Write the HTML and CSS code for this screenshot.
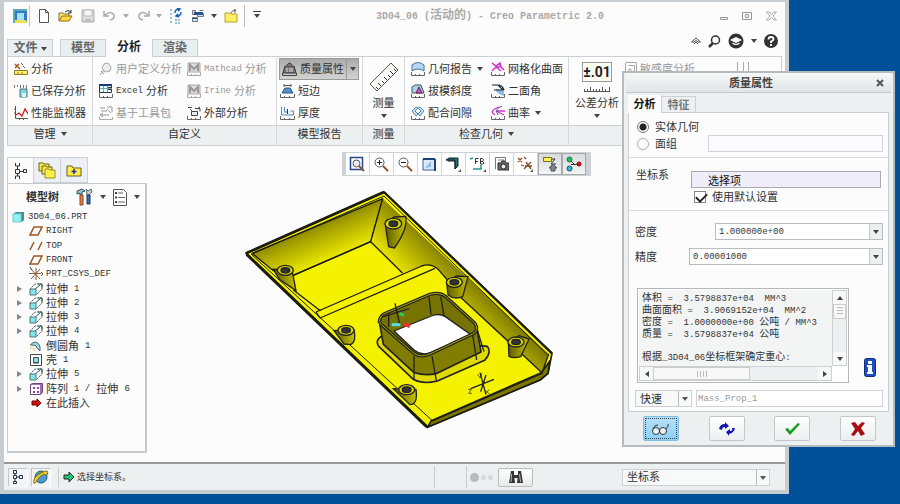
FILE: index.html
```html
<!DOCTYPE html>
<html lang="zh-CN">
<head>
    <meta charset="UTF-8">
    <meta name="viewport" content="width=device-width, initial-scale=1.0">
    <title>3D04_06 - Creo Parametric 2.0</title>
    <link rel="stylesheet" href="styles.css">
</head>
<body>

<!-- shared icons -->
<svg class="sprite" aria-hidden="true">
    <symbol id="plane" viewBox="0 0 14 12"><path d="M5 2h8l-4 8H1z" fill="none" stroke="#9a5526" stroke-width="1.5"/></symbol>
    <symbol id="extrude" viewBox="0 0 14 14"><path d="M1 7l5-5h7v5l-6 6" fill="none" stroke="#456" stroke-dasharray="2 1"/><path d="M5 8l6-5M9 2h4v4" fill="none" stroke="#255"/><path d="M1 7h6v6H1z" fill="#7de8ee" stroke="#577"/></symbol>
    <symbol id="folder" viewBox="0 0 16 14"><path d="M1 3h5l1 2h8v8H1z" fill="#ffee4a" stroke="#665f20"/></symbol>
    <symbol id="ruled-m" viewBox="0 0 14 14"><path d="M1 1h12v9H1z" fill="#ddd" stroke="#aaa"/><path d="M3 9V3l4 4 4-4v6" fill="none" stroke="#999" stroke-width="2"/><path d="M.5 10v3.500h13V10M4.500 12v1M8.500 12v1" fill="none" stroke="#aaa"/></symbol>
    <symbol id="glass" viewBox="0 0 16 16"><circle cx="6.500" cy="6.500" r="4.500" fill="#fff" stroke="#555"/><path d="M10 10l5 5" stroke="#8b5530" stroke-width="2"/></symbol>
</svg>

<main class="window">
    <header class="titlebar">
        <div class="quick">
            <button class="ico app" title="Creo"><svg width="14" height="14" viewBox="0 0 14 14"><path d="M0 0h14v14H0z" fill="#b9d96e"/><path d="M2 2h12v10H2z" fill="#3a77c8"/><path d="M4 4h7v7H4z" fill="#9fe6ef"/><path d="M0 0h14v2H2v12H0z" fill="#5aa9bd"/><path d="M2 11h11v3H2z" fill="#edde54"/></svg></button>
            <button class="ico" title="新建"><svg width="14" height="14" viewBox="0 0 14 14"><path d="M2.500.5h6l3 3v10h-9zM8.500.5v3h3" fill="#fff" stroke="#555"/></svg></button>
            <button class="ico" title="打开"><svg width="16" height="14" viewBox="0 0 16 14"><path d="M1 12V4h4l1 1h5v2" fill="#ffe97a" stroke="#8a7020"/><path d="M1 12l3-5h10l-3 5z" fill="#ffd93c" stroke="#8a7020"/><path d="M7 3q3-3 6 0M13 1v3h-3" fill="none" stroke="#333"/></svg></button>
            <button class="ico" title="保存"><svg width="14" height="14" viewBox="0 0 14 14"><path d="M1 1h12v12H1z" fill="#ddd" stroke="#aaa"/><path d="M3 1h8v6H3z" fill="#f5f5f5" stroke="#bbb"/><path d="M4 10h6v3H4z" fill="#bbb"/></svg></button>
            <button class="ico" title="撤消"><svg width="14" height="14" viewBox="0 0 14 14"><path d="M2 6q6-5 9 0 1 4-4 5M1 2v5h5" fill="none" stroke="#aaa" stroke-width="1.500"/></svg></button>
            <i class="caret dim"></i>
            <button class="ico" title="重做"><svg width="14" height="14" viewBox="0 0 14 14"><path d="M12 6Q6 1 3 6q-1 4 4 5M13 2v5H8" fill="none" stroke="#aaa" stroke-width="1.500"/></svg></button>
            <i class="caret dim"></i>
            <button class="ico" title="重新生成"><svg width="14" height="16" viewBox="0 0 14 16"><path d="M1 2h3M1 6h3M1 10h3M6 12h6M6 15h6M1 14h3" stroke="#36839c" stroke-dasharray="2 1"/><path d="M6 5q0-4 4-4M8 0l3 1-2 2M12 4q0 4-4 4M10 9L7 8l2-2" fill="none" stroke="#1465b8" stroke-width="1.500"/></svg></button>
            <button class="ico" title="窗口"><svg width="14" height="14" viewBox="0 0 14 14"><path d="M1.500 1.500h3v4h-3zM6.500 4.500h6v3h-6zM1.500 8.500h5v4h-5zM8.500 1.500h4" fill="#cfe1f2" stroke="#777"/><path d="M3 3h9v3H3zM1 9h5v1H1z" fill="#27548f"/></svg></button>
            <i class="caret"></i>
            <button class="ico" title="关闭"><svg width="14" height="14" viewBox="0 0 14 14"><path d="M1 4h5l1 1h6v8H1z" fill="#ffef65" stroke="#b5a22c"/><path d="M7 4q1-3 5-3M11 0v4" fill="none" stroke="#5b5b4b"/></svg></button>
            <button class="ico more" title="自定义"><i class="caret lined"></i></button>
        </div>
        <h1><span>3D04_06 (</span>活动的<span>) - Creo Parametric 2.0</span></h1>
        <div class="winbtns">
            <button title="最小化"><svg width="8" height="10" viewBox="0 0 8 10"><path d="M.5 6.500h7v2h-7z" fill="none" stroke="#999"/></svg></button>
            <button title="还原"><svg width="10" height="10" viewBox="0 0 10 10"><path d="M.5 1.500h9v7h-9zM3.500 3.500h3v3h-3z" fill="none" stroke="#999"/></svg></button>
            <button title="关闭"><svg width="11" height="10" viewBox="0 0 11 10"><path d="M.5 1h3l2 2.500L8 1h2.500L7 5l3.500 4H8L5.500 6.500 3 9H.5L4 5z" fill="none" stroke="#aaa"/></svg></button>
        </div>
    </header>

    <nav class="tabs">
        <button class="tab file">文件<i class="caret"></i></button>
        <button class="tab">模型</button>
        <button class="tab on">分析</button>
        <button class="tab">渲染</button>
        <div class="help">
            <button title="最小化功能区"><svg width="10" height="8" viewBox="0 0 10 8"><path d="M.5 5L5 1l4.500 4H7L5 3.500 3 5zM3 7l2-2 2 2" fill="none" stroke="#555"/></svg></button>
            <button title="搜索"><svg width="13" height="13" viewBox="0 0 13 13"><circle cx="7.500" cy="5" r="4" fill="none" stroke="#333" stroke-width="1.500"/><path d="M5 8l-4 4" stroke="#333" stroke-width="2.500"/></svg></button>
            <button title="学习"><svg width="16" height="16" viewBox="0 0 16 16"><circle cx="8" cy="8" r="7.500" fill="#333"/><path d="M2 7l6-3 6 3-6 3z" fill="#fff"/><path d="M4.500 9.500V11q3.500 2 7 0V9.500L8 11z" fill="#fff"/></svg></button>
            <i class="caret"></i>
            <button title="帮助"><svg width="14" height="14" viewBox="0 0 14 14"><circle cx="7" cy="7" r="7" fill="#333"/><path d="M4.500 5.500Q4.500 3 7 3t2.500 2.200Q9.500 6.500 7 7.500V9M7 10v2" fill="none" stroke="#fff" stroke-width="1.800"/></svg></button>
        </div>
    </nav>

    <section class="ribbon">
        <div class="group">
            <div class="cmds">
                <button class="cmd"><svg width="14" height="14" viewBox="0 0 14 14"><path d="M1 2l5 5M1 6l4-4" stroke="#a85b1e" stroke-width="1.500"/><path d="M7 1l2 2M9 4l2 2" stroke="#555"/><path d="M.5 8.500h13v4H.5z" fill="#ffee70" stroke="#8f7d1e"/><path d="M4 10v2M8 10v2" stroke="#8f7d1e"/></svg>分析</button>
                <button class="cmd"><svg width="14" height="14" viewBox="0 0 14 14"><path d="M.5 1v3M3.500 1v2M6.500 1v3M9.500 1v3M12.500 1v6" stroke="#777"/><path d="M6 5h7v8H6z" fill="#7dd5dc" stroke="#577"/><path d="M8 9h4v4H8z" fill="#def"/></svg>已保存分析</button>
                <button class="cmd"><svg width="14" height="14" viewBox="0 0 14 14"><path d="M1.500 0v12.500H14M0 3h1M0 7h1M5.500 12v2M9.500 12v2" fill="none" stroke="#555"/><path d="M2 9l3-2 3 3 3-7 3 5" fill="none" stroke="#c22" stroke-width="1.300"/></svg>性能监视器</button>
            </div>
            <h2>管理 <i class="caret"></i></h2>
        </div>

        <div class="group">
            <div class="cmds two custom">
                <button class="cmd" disabled><svg width="14" height="14" viewBox="0 0 14 14"><path d="M5 2l4-1 3 4-1 4-5 1-3-4z" fill="#eee" stroke="#aaa"/><path d="M1 13l4-5M2 9l3 3" stroke="#999"/></svg>用户定义分析</button>
                <button class="cmd" disabled><svg width="14" height="14"><use href="#ruled-m"/></svg><span class="lat">Mathcad</span> 分析</button>
                <button class="cmd"><svg width="14" height="14" viewBox="0 0 14 14"><path d="M.5.5h12v8H.5z" fill="#dff" stroke="#334"/><path d="M0 0h13v2H0z" fill="#1c3a7a"/><path d="M8 3h4v3H8z" fill="#333"/><path d="M4.500 2v6M8.500 2v6M1 4.500h12" stroke="#89a"/><path d="M.5 9v4.500h13V10M4.500 12v1M8.500 12v1" fill="none" stroke="#666"/></svg><span class="lat">Excel</span> 分析</button>
                <button class="cmd" disabled><svg width="14" height="14"><use href="#ruled-m"/></svg><span class="lat">Irine</span> 分析</button>
                <button class="cmd" disabled><svg width="14" height="14" viewBox="0 0 14 14"><path d="M1 2h5M8 1h5v5M2 5h6M8 3l4 4M4 7l-3 2 3 2M2 9h8" fill="none" stroke="#999"/><path d="M.5 11v2.500h13V11" fill="none" stroke="#aaa"/></svg>基于工具包</button>
                <button class="cmd"><svg width="14" height="14" viewBox="0 0 14 14"><path d="M1 1.500h4M8 2.500h5v3M4.500 5.500h6v4h-6z" fill="#eee" stroke="#444"/><path d="M3 3l2 2M10 3l3-2" stroke="#444"/><path d="M.5 10v3.500h13V10M4.500 12v1M8.500 12v1" fill="none" stroke="#666"/></svg>外部分析</button>
            </div>
            <h2>自定义</h2>
        </div>

        <div class="group">
            <div class="cmds report-cmds">
                <button class="cmd pressed"><svg width="15" height="14" viewBox="0 0 15 14"><path d="M5 3q2.500-4 5 0M3 4h9l2 7H1z" fill="#777" stroke="#333"/><path d="M5 6v4M8 6v4M10 6v4" stroke="#ddd"/><path d="M.5 11v2.500h14V11" fill="none" stroke="#444"/></svg>质量属性<span class="split"><i class="caret"></i></span></button>
                <button class="cmd"><svg width="15" height="14" viewBox="0 0 15 14"><path d="M4 1.500h7M4 0v3M11 0v3" stroke="#555"/><path d="M5 4h5l3 5H2z" fill="#4d92d3" stroke="#357"/><path d="M.5 10v3.500h14V10M4.500 12v1M9.500 12v1" fill="none" stroke="#666"/></svg>短边</button>
                <button class="cmd"><svg width="15" height="14" viewBox="0 0 15 14"><path d="M1.500 1v8h12V5h-3M4.500 1v5h3" fill="#eaf4fd" stroke="#5d86b8"/><path d="M7.500 3v5" stroke="#333"/><path d="M.5 10v3.500h14V10M4.500 12v1M9.500 12v1" fill="none" stroke="#666"/></svg>厚度</button>
            </div>
            <h2>模型报告</h2>
        </div>

        <div class="group">
            <button class="big"><svg width="30" height="30" viewBox="0 0 30 30"><path d="M1 22L22 1l7 7L8 29z" fill="#f7f7f3" stroke="#555"/><path d="M9 27l-2-2M12 24l-3-3M15 21l-2-2M18 18l-3-3M21 15l-2-2M24 12l-3-3M27 9l-2-2" stroke="#333"/></svg>测量<i class="caret"></i></button>
            <h2>测量</h2>
        </div>

        <div class="group">
            <div class="cmds two check">
                <button class="cmd"><svg width="14" height="14" viewBox="0 0 14 14"><path d="M1 9V3q6-5 12 0v6Q7 5 1 9z" fill="#b5d7f5" stroke="#46749e"/><path d="M.5 10v3.500h13V10M4.500 12v1M8.500 12v1" fill="none" stroke="#666"/></svg>几何报告<i class="caret push"></i></button>
                <button class="cmd"><svg width="14" height="14" viewBox="0 0 14 14"><path d="M1 1l4 3 4-3 1 4 3 3M1 9l4-4 5 4M5 4q2 2 4 0" fill="none" stroke="#d033c8" stroke-width="1.500"/><path d="M.5 10v3.500h13V10M4.500 12v1M8.500 12v1" fill="none" stroke="#666"/></svg>网格化曲面</button>
                <button class="cmd"><svg width="14" height="14" viewBox="0 0 14 14"><path d="M1 3l3-2h6l3 8H1z" fill="#a9d3e8" stroke="#456"/><path d="M5 9l3-6 3 6z" fill="#e04fc9" stroke="#624"/><path d="M.5 10v3.500h13V10M4.500 12v1M8.500 12v1" fill="none" stroke="#666"/></svg>拔模斜度</button>
                <button class="cmd"><svg width="14" height="14" viewBox="0 0 14 14"><path d="M5 5l8 2v5q-5-1-8-5z" fill="#87bfe6"/><path d="M1 1h6l5 5H3M8 1q4 1 5 5" fill="none" stroke="#123" stroke-width="1.200"/><path d="M.5 10v3.500h13V10M4.500 12v1M8.500 12v1" fill="none" stroke="#666"/></svg>二面角</button>
                <button class="cmd"><svg width="14" height="14" viewBox="0 0 14 14"><path d="M5 1L1 5l4 5 2-2-3-3 3-3zM9 1l4 4-4 5-2-2 3-3-3-3z" fill="#c2e1f5" stroke="#5a8caf"/><path d="M.5 10v3.500h13V10M4.500 12v1M8.500 12v1" fill="none" stroke="#666"/></svg>配合间隙</button>
                <button class="cmd"><svg width="14" height="14" viewBox="0 0 14 14"><path d="M8 1Q-3 5 4 9M14 5H5l8 4" fill="none" stroke="#d033c8" stroke-width="1.300"/><path d="M11 0Q3 3 7 9" fill="none" stroke="#35689d"/><path d="M.5 10v3.500h13V10M4.500 12v1M8.500 12v1" fill="none" stroke="#666"/></svg>曲率<i class="caret push"></i></button>
            </div>
            <h2>检查几何 <i class="caret"></i></h2>
        </div>

        <div class="group last">
            <div class="pair">
                <button class="big tol"><b>±.01</b><svg width="26" height="6" viewBox="0 0 26 6"><path d="M0 5.500h26M.5 3v2M3.500 3v2M6.500 1v4M9.500 3v2M12.500 3v2M15.500 3v2M18.500 1v4M21.500 3v2M25.500 1v4" fill="none" stroke="#555"/></svg>公差分析<i class="caret"></i></button>
                <button class="cmd" disabled><svg width="12" height="14" viewBox="0 0 12 14"><path d="M.5.5h11v13M3.500 3.500h6v9M.5 1v12M4 7h2v5H4z" fill="none" stroke="#aaa"/></svg>敏感度分析</button>
                <svg class="pins" width="16" height="12" viewBox="0 0 16 12"><path d="M2.500 0v9M8.500 0v9M13.500 0v9M0 9.500h5M6 9.500h5M11 9.500h5" stroke="#aaa"/></svg>
            </div>
            <h2></h2>
        </div>
    </section>

    <section class="work">
        <aside class="nav">
            <div class="navtabs">
                <button class="on" title="模型树"><svg width="14" height="18" viewBox="0 0 14 18"><path d="M1.500 1v3h4V1M1.500 17v-3h4v3M1.500 7.500h4v4h-4zM3.500 4v3M3.500 12v2M6 9.500h3M9.500 7.500h3v3h-3z" fill="none" stroke="#333"/></svg></button>
                <button title="文件夹浏览器"><svg width="18" height="17" viewBox="0 0 18 17"><path d="M1 1h4l1 1h5v7H1z" fill="#ffee4a" stroke="#665f20"/><path d="M4 4h4l1 1h5v7H4z" fill="#ffee4a" stroke="#665f20"/><path d="M7 7h4l1 1h5v8H7z" fill="#ffee4a" stroke="#998f30"/></svg></button>
                <button title="收藏夹"><svg width="16" height="14" viewBox="0 0 16 14"><use href="#folder"/><path d="M8 6v5M5.500 8.500h5" stroke="#1a2d9c" stroke-width="1.500"/></svg></button>
            </div>
            <div class="treebox">
                <div class="treehead">
                    <strong>模型树</strong>
                    <button title="设置"><svg width="17" height="18" viewBox="0 0 17 18"><path d="M1 3l5-2 3 2-3 1v3H4V5L1 6z" fill="#8cc9d2" stroke="#355"/><path d="M4 7h3v10H4z" fill="#f08028" stroke="#843"/><path d="M10 1l2 2 3-2 1 3-3 3h-2z" fill="#ccc" stroke="#666"/><path d="M11 7h3v9h-3z" fill="#2e71c4" stroke="#235"/></svg></button>
                    <i class="caret"></i>
                    <button title="显示"><svg width="14" height="17" viewBox="0 0 14 17"><path d="M.5.5h10l3 3v13H.5z" fill="#fff" stroke="#555"/><path d="M5 4h5M5 8.500h7M5 13h7" stroke="#666"/><path d="M2 3h2v2H2zM2 7.500h2v2H2zM2 12h2v2H2z" fill="#444"/></svg></button>
                    <i class="caret"></i>
                </div>
                <ul class="tree">
                    <li class="root"><svg width="13" height="12" viewBox="0 0 13 12"><path d="M1 3l3-2h8v8l-2 2H1z" fill="#458f96"/><path d="M1 3h8v8H1z" fill="#8ef2f4" stroke="#7cc"/></svg><span class="lat">3D04_06.PRT</span></li>
                    <li><svg width="14" height="12"><use href="#plane"/></svg><span class="lat">RIGHT</span></li>
                    <li><svg width="14" height="12" viewBox="0 0 14 12"><path d="M5 2L1 10M13 2L9 10" stroke="#9a5526" stroke-width="1.500"/></svg><span class="lat">TOP</span></li>
                    <li><svg width="14" height="12"><use href="#plane"/></svg><span class="lat">FRONT</span></li>
                    <li><svg width="14" height="14" viewBox="0 0 14 14"><path d="M0 6.500h12M7 1v12M2 12l9-10M2 2l9 10" stroke="#8b5a33"/><path d="M1 0l2 3M12 5l2 2-2 2" fill="none" stroke="#444"/></svg><span class="lat">PRT_CSYS_DEF</span></li>
                    <li class="sub"><svg width="14" height="14"><use href="#extrude"/></svg>拉伸 <span class="lat">1</span></li>
                    <li class="sub"><svg width="14" height="14"><use href="#extrude"/></svg>拉伸 <span class="lat">2</span></li>
                    <li class="sub"><svg width="14" height="14"><use href="#extrude"/></svg>拉伸 <span class="lat">3</span></li>
                    <li class="sub"><svg width="14" height="14"><use href="#extrude"/></svg>拉伸 <span class="lat">4</span></li>
                    <li><svg width="14" height="12" viewBox="0 0 14 12"><path d="M1 5l4-3q7 0 6 9l-3-3q0-3-4-3z" fill="#8ee4ea" stroke="#566"/><path d="M1 5v4l6 3V8z" fill="#efe6c8"/></svg>倒圆角 <span class="lat">1</span></li>
                    <li><svg width="14" height="12" viewBox="0 0 14 12"><path d="M1.500.5h11v11h-11z" fill="#fff" stroke="#444"/><path d="M4.500 3.500h5v5h-5zM4 9h6" fill="#8be3e8" stroke="#355"/></svg>壳 <span class="lat">1</span></li>
                    <li class="sub"><svg width="14" height="14"><use href="#extrude"/></svg>拉伸 <span class="lat">5</span></li>
                    <li class="sub"><svg width="14" height="12" viewBox="0 0 14 12"><path d="M1.500 1.500l2-1h10v9l-2 2h-10z" fill="#a46bb8" stroke="#6b4580"/><path d="M2 2h9v9H2z" fill="#fff"/><path d="M4 4h2v2H4zM8 4h2v2H8zM4 8h2v2H4zM8 8h2v2H8z" fill="#83489c"/></svg>阵列 <span class="lat">1 /</span> 拉伸 <span class="lat">6</span></li>
                    <li><svg width="14" height="10" viewBox="0 0 14 10"><path d="M3 3h5V1l4 4-4 4V7H3z" fill="#d01010" stroke="#700"/></svg>在此插入</li>
                </ul>
            </div>
        </aside>

        <div class="canvas">
            <div class="viewbar">
                <button title="重新调整"><svg width="16" height="16" viewBox="0 0 16 16"><path d="M1.500 1.500h12v12h-12z" fill="#fff" stroke="#21468b" stroke-width="1.500"/><circle cx="7.500" cy="7.500" r="3.500" fill="#eef" stroke="#555"/><path d="M10 10l5 5" stroke="#8b5530" stroke-width="2"/></svg></button>
                <button title="放大"><svg width="16" height="16" viewBox="0 0 16 16"><use href="#glass"/><path d="M4 6.500h5M6.500 4v5" stroke="#222"/></svg></button>
                <button title="缩小"><svg width="16" height="16" viewBox="0 0 16 16"><use href="#glass"/><path d="M4 6.500h5" stroke="#222"/></svg></button>
                <button title="重画"><svg width="14" height="14" viewBox="0 0 14 14"><path d="M1 2h12v11H1z" fill="#dce9fa" stroke="#345f9f"/><path d="M1 1h12v2H1zM12 2h2v12h-2z" fill="#1c437f"/><path d="M3 11l6-7v6z" fill="#92b8e8"/></svg></button>
                <button title="显示样式"><svg width="16" height="16" viewBox="0 0 16 16"><path d="M1 4l3-2h9v8l-3 3V5H3" fill="#1d7474" stroke="#123"/><path d="M1 4h9v9" fill="none" stroke="#222"/><path d="M16 16v-3l-3 3z" fill="#555"/></svg></button>
                <button title="已保存方向"><svg width="17" height="16" viewBox="0 0 17 16"><path d="M6.500 8V2.500h3M6 5.500h3M11.500 8V2.500h2q2 1 0 3 3 2 0 2.500h-2M12 5.500h2" fill="none" stroke="#333"/><path d="M1 3l3-1M4 13h8V9" fill="none" stroke="#2c9090" stroke-width="1.500"/><path d="M17 16v-3l-3 3z" fill="#555"/></svg></button>
                <button title="视图管理器"><svg width="16" height="16" viewBox="0 0 16 16"><path d="M2.500 13V1.500h10V5M5 4h6M5 7h2" fill="none" stroke="#777"/><path d="M5 7h3l1-2h3l1 2h3v7H5z" fill="#666" stroke="#333"/><circle cx="10.500" cy="10.500" r="2.500" fill="#eee" stroke="#222"/></svg></button>
                <button title="基准显示"><svg width="16" height="16" viewBox="0 0 16 16"><path d="M1 2l4 4M5 2L1 6M7 1l2 2M9 6l5 7M14 6l-7 7M4 9l3 1M8 10h7" stroke="#8b4a20" stroke-width="1.300"/><path d="M16 16v-3l-3 3z" fill="#555"/></svg></button>
                <button class="down" title="注释显示"><svg width="16" height="16" viewBox="0 0 16 16"><path d="M1.500 1.500h8v4h-8z" fill="#fff25a" stroke="#77701d"/><path d="M10 3h3M13 3l-4 5h5" fill="none" stroke="#333"/><path d="M7 12l4-4 4 4h-2v3H9v-3z" fill="#78858c" stroke="#555"/></svg></button>
                <button class="down" title="旋转中心"><svg width="16" height="16" viewBox="0 0 16 16"><path d="M4 4l4 4M5 8.500h7" fill="none" stroke="#333"/><circle cx="3.500" cy="3.500" r="2.500" fill="#22c04a" stroke="#175"/><circle cx="3.500" cy="12.500" r="2.500" fill="#35b9d8" stroke="#156"/><circle cx="13" cy="8" r="2" fill="#e01818" stroke="#801"/></svg></button>
            </div>

            <svg class="model" viewBox="0 0 960 780" role="img" aria-label="3D04_06">
                <defs>
                    <linearGradient id="backWall" gradientUnits="userSpaceOnUse" x1="210" y1="120" x2="265" y2="250">
                        <stop offset="0" stop-color="#777300"/><stop offset=".35" stop-color="#a8a300"/><stop offset="1" stop-color="#f4f000"/>
                    </linearGradient>
                    <linearGradient id="sideWall" gradientUnits="userSpaceOnUse" x1="690" y1="295" x2="600" y2="385">
                        <stop offset="0" stop-color="#817d00"/><stop offset="1" stop-color="#e4df00"/>
                    </linearGradient>
                    <linearGradient id="boss" x1="0" x2="1"><stop offset="0" stop-color="#5e5b00"/><stop offset="1" stop-color="#c7c200"/></linearGradient>
                </defs>
                <g stroke="#1c1c10" stroke-width="5" stroke-linejoin="round">
                    <path d="M18 220L432 36 936 520 924 580 900 600 562 742z" fill="#f5f200"/>
                    <path d="M562 742l338-142 24-20 6-38-26 36-330 144z" fill="#7b7700"/>
                    <path d="M36 220L428 56 392 185 158 287 100 272z" fill="url(#backWall)" stroke-width="4"/>
                    <path d="M428 56L926 522 906 578 655 345 588 266 545 258 488 280 392 185z" fill="url(#sideWall)" stroke="none"/>
                    <path d="M428 56L392 185 488 280M392 185L158 287M160 330l85 65M660 350L906 578 926 522" fill="none" stroke-width="4"/>
                    <path d="M230 398L545 258q34-12 58 20l40 42-30 20-30-78L240 418z" fill="#f5f200" stroke="none"/>
                    <path d="M228 396L545 258q34-12 58 20l22 25M228 396l12 18L585 265" fill="none" stroke-width="4"/>
                    <path d="M34 223L432 48 922 524M34 223L578 723 908 580" fill="none" stroke-width="3"/>
                    <path d="M20 223l540 517" fill="none" stroke-width="9"/>
                    <path d="M18 220L432 36" fill="none" stroke-width="8"/>
                    <path d="M432 36l504 484" fill="none" stroke-width="7"/>
                </g>
                <!-- window frame in the middle of the part -->
                <g stroke="#222" stroke-width="5" stroke-linejoin="round">
                    <path d="M425 468q-22 14-8 32l103 98q28 16 72 5l142-62q22-24 8-42z" fill="#dfda00"/>
                    <path d="M418 425l12 68 92 85q34 10 66 3l135-65-12-70z" fill="#817d00"/>
                    <path d="M418 425q2-20 20-26l132-56q30-8 46 6l88 80q12 16 0 30L570 522q-28 12-48-2l-98-86z" fill="#777300"/>
                    <path d="M462 453l112-45q22-10 42 2l78 55-126 54q-24 8-45-8z" fill="#fff" stroke-width="4"/>
                    <path d="M418 425q2-20 20-26l132-56q30-8 46 6l88 80q12 16 0 30L570 522q-28 12-48-2l-98-86z" fill="none" stroke-width="10"/>
                    <path d="M418 425q2-20 20-26l132-56q30-8 46 6l88 80q12 16 0 30L570 522q-28 12-48-2l-98-86z" fill="none" stroke="#aaa600" stroke-width="3"/>
                    <path d="M567 350l6 54M602 350l10 57M522 528v70M576 528l13 74M698 465l12 75M712 450l20 65" fill="none" stroke-width="4"/>
                </g>
                <!-- screw bosses -->
                <g stroke="#222" stroke-width="4">
                    <path d="M436 135l26-24 35-2q8 36-34 95l-17-4z" fill="url(#boss)"/><ellipse cx="460" cy="131" rx="25" ry="16" fill="#d9d500"/><ellipse cx="460" cy="131" rx="13" ry="8" fill="#333"/>
                    <path d="M100 268l18 30 50 34-12-62z" fill="url(#boss)"/><ellipse cx="136" cy="271" rx="24" ry="15" fill="#d9d500"/><ellipse cx="136" cy="271" rx="13" ry="8" fill="#333"/>
                    <path d="M620 306l30-18 34 2-16 60q-25 10-44-5z" fill="url(#boss)"/><ellipse cx="643" cy="307" rx="24" ry="15" fill="#d9d500"/><ellipse cx="643" cy="307" rx="13" ry="8" fill="#333"/>
                    <path d="M282 452l30 40 20 2q18-8 10-45z" fill="url(#boss)"/><ellipse cx="318" cy="451" rx="24" ry="15" fill="#d9d500"/><ellipse cx="318" cy="451" rx="13" ry="8" fill="#333"/>
                    <path d="M805 487l32-20 30 10-24 52q-22 8-36 0z" fill="url(#boss)"/><ellipse cx="828" cy="486" rx="24" ry="15" fill="#d9d500"/><ellipse cx="828" cy="486" rx="13" ry="8" fill="#333"/>
                    <path d="M460 626l50 48q24 0 18-46z" fill="url(#boss)"/><ellipse cx="500" cy="629" rx="24" ry="15" fill="#d9d500"/><ellipse cx="500" cy="629" rx="13" ry="8" fill="#333"/>
                </g>
                <!-- coordinate systems -->
                <g fill="none" stroke="#222" stroke-width="4">
                    <path d="M465 370l14 62M430 410l78-24M446 400v40M720 578l18 66M692 626l70-28M738 585l-16 50"/>
                    <path d="M712 582l8 12 6-14M684 628h10l-8 12h10M736 630l12 12M748 628l-12 14" stroke-width="2"/>
                    <path d="M455 434h26" stroke="#54dfe5" stroke-width="9"/>
                    <path d="M478 400l14 6" stroke="#23c95b" stroke-width="9"/>
                    <path d="M492 432l18 7" stroke="#f03030" stroke-width="11"/>
                </g>
            </svg>
        </div>
    </section>

    <footer class="status">
        <button class="sbtn" title="模型树"><svg width="12" height="16" viewBox="0 0 12 16"><path d="M1.500 1.500h3v3h-3zM1.500 6.500h3v3h-3zM1.500 12.500h3v2h-3zM7.500 6.500h3v3h-3zM3 5v1M3 10v2M5 8h2" fill="none" stroke="#234"/></svg></button>
        <button class="sbtn" title="浏览器"><svg width="16" height="16" viewBox="0 0 16 16"><circle cx="8" cy="8" r="6" fill="#4b9bd8" stroke="#256"/><path d="M4 4q4-3 6 0L6 8z" fill="#45ab48"/><path d="M1 14Q-1 9 8 4t6 2Q9 4 5 10t-4 4z" fill="#f4cb35" stroke="#866b17"/></svg></button>
        <p class="msg"><svg width="12" height="12" viewBox="0 0 12 12"><path d="M1 4h5V1l5 5-5 5V8H1z" fill="#22c877" stroke="#222"/></svg>选择坐标系。</p>
        <span class="cell"></span>
        <span class="cell dots"><i></i><i></i><i></i></span>
        <button class="find" title="查找"><svg width="16" height="14" viewBox="0 0 16 14"><path d="M3 1h3v4l1 8H1zM10 1h3l2 12H9l1-8zM6 5h4v3H6z" fill="#333"/><path d="M3.500 4L3 12M11.500 4l1 8" stroke="#bbb"/></svg></button>
        <span class="select filter"><select aria-label="过滤器"><option>坐标系</option></select></span>
    </footer>
</main>

<section class="dialog" role="dialog" aria-labelledby="dlg-title">
    <header class="dlg-title">
        <h2 id="dlg-title">质量属性</h2>
        <button title="关闭"><svg width="8" height="8" viewBox="0 0 8 8"><path d="M1 1l6 6M7 1L1 7" stroke="#555" stroke-width="2"/></svg></button>
    </header>
    <nav class="dlg-tabs">
        <button class="on">分析</button>
        <button>特征</button>
    </nav>
    <form class="panel">
        <div class="sect geom">
            <div class="row">
                <input type="radio" name="geom" id="solid" checked><label for="solid">实体几何</label>
            </div>
            <div class="row">
                <input type="radio" name="geom" id="quilt"><label for="quilt">面组</label>
                <input class="field pale" type="text" aria-label="面组选择">
            </div>
        </div>
        <div class="sect csys">
            <label for="csys">坐标系</label>
            <div>
                <input class="field pick" id="csys" type="text" value="选择项">
                <div class="row"><input type="checkbox" id="def" checked><label for="def">使用默认设置</label></div>
            </div>
        </div>
        <div class="sect values">
            <div class="row">
                <label class="dens" for="dens">密度</label>
                <span class="combo"><input id="dens" type="text" value="1.000000e+00"><button type="button" title="密度列表"><i class="caret"></i></button></span>
            </div>
            <div class="row">
                <label for="acc">精度</label>
                <span class="combo"><input id="acc" type="text" value="0.00001000"><button type="button" title="精度列表"><i class="caret"></i></button></span>
            </div>
            <div class="result">
                <div class="report">
<pre>体积<span> =  3.5798837e+04  MM^3</span>
曲面面积<span> =  3.9069152e+04  MM^2</span>
密度<span> =  1.0000000e+00 </span>公吨<span> / MM^3</span>
质量<span> =  3.5798837e+04 </span>公吨

根据<span>_3D04_06</span>坐标框架确定重心<span>:</span></pre>
                    <div class="vbar">
                        <button type="button" title="向上"><i class="caret up"></i></button>
                        <div class="thumb"></div>
                        <button type="button" title="向下"><i class="caret"></i></button>
                    </div>
                    <div class="hbar">
                        <button type="button" title="向左"><i class="caret left"></i></button>
                        <div class="thumb"></div>
                        <button type="button" title="向右"><i class="caret right"></i></button>
                    </div>
                </div>
                <button type="button" class="info" title="信息"><svg width="12" height="19" viewBox="0 0 12 19"><rect x=".5" y=".5" width="11" height="18" rx="2" fill="#1d4fc0" stroke="#0d2c80"/><path d="M4 3h4v3H4zM3 7h5v7h1v2H3v-2h1V9H3z" fill="#fff"/></svg></button>
            </div>
            <div class="row name">
                <span class="select"><select aria-label="分析类型"><option>快速</option></select></span>
                <input class="field" type="text" aria-label="分析名称" placeholder="Mass_Prop_1">
            </div>
        </div>
    </form>
    <div class="actions">
        <button class="active" title="预览"><svg width="20" height="12" viewBox="0 0 20 12"><circle cx="5" cy="8" r="3.500" fill="#e8f4fa" stroke="#333"/><circle cx="12" cy="8" r="3.500" fill="#e8f4fa" stroke="#333"/><path d="M2 6q2-5 5-4M15 6q3-3 2-5M8 7h1" fill="none" stroke="#333"/></svg></button>
        <button title="重复"><svg width="18" height="14" viewBox="0 0 18 14"><path d="M1 7q1-5 6-5V0l4 4-4 3V5Q4 5 4 8zM17 6q-1 5-6 6v2L8 10l4-3v2q3 0 2-3z" fill="#1414b4"/></svg></button>
        <button title="确定"><svg width="16" height="12" viewBox="0 0 16 12"><path d="M1 6l3-1 2 3 8-8 2 1L6 12z" fill="#149c1b"/></svg></button>
        <button title="取消"><svg width="16" height="14" viewBox="0 0 16 14"><path d="M1 1l4-1 3 4 4-4 3 1-4 5 4 6-4 2-3-5-4 5-3-1 4-6z" fill="#a80d12"/></svg></button>
    </div>
</section>

</body>
</html>
```
FILE: styles.css
```css
* {
    box-sizing: border-box;
}

body {
    margin: 0;
    min-height: 100vh;
    background: #00509a;
    color: #333;
    font-family: "Liberation Sans", "Noto Sans CJK SC", sans-serif;
    font-size: 11px;
    line-height: 14px;
}

button, input, select {
    font: inherit;
    color: inherit;
    margin: 0;
    padding: 0;
    border: 0;
    background: none;
}

button svg, li svg, p svg {
    display: block;
    flex: none;
}

h1, h2, p, ul, pre {
    margin: 0;
    padding: 0;
}

.sprite {
    position: absolute;
    width: 0;
    height: 0;
}

/* latin text is a size smaller than the chinese around it */
.lat, pre span {
    font-family: "Liberation Mono", monospace;
    font-size: 9px;
}

.caret {
    display: inline-block;
    flex: none;
    border: 3px solid transparent;
    border-top: 4px solid #444;
    border-bottom: 0;
}
.caret.dim { border-top-color: #aaa; }
.caret.lined {
    position: relative;
}
.caret.lined::before {
    content: "";
    position: absolute;
    left: -4px;
    top: -7px;
    width: 8px;
    border-top: 1px solid #444;
}
.caret.up { transform: rotate(180deg); }
.caret.left { transform: rotate(90deg); }
.caret.right { transform: rotate(-90deg); }

/* main window */
.window {
    position: absolute;
    top: 0;
    left: 0;
    right: 111px;
    bottom: 10px;
    display: flex;
    flex-direction: column;
    border: 4px solid #c6ccd0;
    border-top-width: 2px;
    background: #fcfcfc;
}

.titlebar {
    display: flex;
    align-items: center;
    height: 28px;
    padding: 0 8px 0 6px;
}
.quick {
    display: flex;
    align-items: center;
    gap: 5px;
}
.ico {
    display: flex;
    align-items: center;
    justify-content: center;
    width: 17px;
    height: 22px;
}
.app {
    width: 20px;
    border-right: 1px solid #ccc;
}
.more {
    width: 24px;
    border-left: 1px solid #bbb;
}
.titlebar h1 {
    flex: 1;
    padding-right: 8px;
    text-align: center;
    font-size: 12px;
    color: #aaa;
    white-space: nowrap;
}
.titlebar h1 span {
    font-family: "Liberation Mono", monospace;
    font-size: 10px;
}
.winbtns {
    display: flex;
    gap: 14px;
}

.tabs {
    display: flex;
    align-items: flex-end;
    height: 26px;
    padding-left: 3px;
}
.tab {
    width: 46px;
    height: 17px;
    border: 1px solid #c9ced1;
    border-bottom: 0;
    background: #e9eef0;
    color: #666;
    font-size: 12px;
    font-weight: bold;
}
.tab.file {
    margin-right: 7px;
}
.tab.file .caret {
    margin: 0 0 1px 3px;
}
.tab.on {
    position: relative;
    height: 20px;
    margin-bottom: -1px;
    border: 0;
    background: #fcfcfc;
    color: #222;
}
.help {
    display: flex;
    align-items: center;
    gap: 7px;
    height: 30px;
    margin-left: auto;
    padding-right: 7px;
}

/* ribbon */
.ribbon {
    display: grid;
    grid-template-columns: 85px 184px 86px 42px 164px 1fr;
    margin: 0 3px;
    border: 1px solid #ccd0d2;
}
.group {
    display: flex;
    flex-direction: column;
    justify-content: space-between;
    border-right: 1px solid #d5d9db;
    overflow: hidden;
}
.group.last { border-right: 0; }
.group h2 {
    height: 20px;
    border-top: 1px solid #ccd0d2;
    background: #edf0f1;
    text-align: center;
    font-size: 11px;
    font-weight: normal;
    line-height: 17px;
}
.group h2 .caret {
    margin: 0 0 2px 2px;
}
.cmds {
    display: grid;
    grid-auto-rows: 22px;
    padding: 1px 0 1px 6px;
}
.two.custom { grid-template-columns: 88px 1fr; }
.two.check { grid-template-columns: 80px 1fr; }
.report-cmds { padding-left: 3px; }
.cmd {
    display: flex;
    align-items: center;
    gap: 3px;
    white-space: nowrap;
}
.cmd:disabled {
    color: #999;
}
.cmd.pressed {
    width: 80px;
    padding-left: 2px;
    border: 1px solid #999;
    background: linear-gradient(#ababab, #d2d2d2);
    margin-left: -1px;
}
.caret.push {
    margin-left: 2px;
}
.split {
    display: flex;
    align-items: center;
    align-self: stretch;
    margin-left: -1px;
    padding-left: 3px;
    border-left: 1px solid #999;
}
.big {
    display: flex;
    flex-direction: column;
    align-items: center;
    gap: 4px;
    padding-top: 5px;
}
.pair {
    display: flex;
    align-items: flex-start;
}
.pair .cmd {
    height: 22px;
    margin-top: 1px;
}
.tol {
    width: 56px;
}
.tol b {
    width: 30px;
    height: 20px;
    border: 1px solid #999;
    background: #fdfdf0;
    font-family: Roboto, sans-serif;
    font-size: 14px;
    font-weight: 700;
    line-height: 18px;
    color: #222;
}
.pins {
    margin: 5px 0 0 40px;
}

/* work area */
.work {
    display: flex;
    flex: 1;
    min-height: 0;
}
.nav {
    display: flex;
    flex-direction: column;
    width: 140px;
    margin: 11px 0 9px 3px;
}
.navtabs {
    display: flex;
    height: 26px;
}
.navtabs button {
    display: flex;
    align-items: center;
    justify-content: center;
    width: 27px;
    border: 1px solid #ccd1d4;
    border-left-width: 0;
    background: #eceff3;
}
.navtabs button.on {
    border-left-width: 1px;
    border-bottom: 0;
    background: #fcfcfc;
}
.treebox {
    flex: 1;
    border: 1px solid #c6cacd;
    border-width: 1px 2px 2px 1px;
}
.treehead {
    display: flex;
    align-items: center;
    gap: 7px;
    height: 26px;
    padding: 0 5px 0 18px;
}
.treehead strong {
    flex: 1;
    white-space: nowrap;
}
.tree {
    display: grid;
    grid-auto-rows: 1fr;
    height: 200px;
    list-style: none;
}
.tree li {
    display: flex;
    align-items: center;
    gap: 3px;
    padding-left: 21px;
    white-space: pre;
}
.tree li.root {
    padding-left: 4px;
}
.tree li.sub {
    padding-left: 9px;
}
.tree li.sub::before {
    content: "";
    margin-right: 4px;
    border: 3px solid transparent;
    border-left: 5px solid #888;
    border-right: 0;
}

.canvas {
    flex: 1;
    display: flex;
    flex-direction: column;
    align-items: flex-start;
    padding-top: 6px;
}
.viewbar {
    display: flex;
    align-self: center;
    border: 1px solid #ccd2d5;
    border-width: 1px 5px 1px 4px;
}
.viewbar button {
    display: flex;
    align-items: center;
    justify-content: center;
    width: 24px;
    height: 22px;
    border-right: 1px solid #d2d6d8;
    background: #fff;
}
.viewbar button.down {
    border: 1px solid #a5a9ab;
    background: linear-gradient(#d8dadb, #f2f3f3);
}
.model {
    flex: none;
    width: 320px;
    margin: 4px 0 0 93px;
}

/* status bar */
.status {
    display: flex;
    align-items: center;
    height: 28px;
    padding: 0 15px 0 4px;
    border-top: 2px solid #999;
    background: #edf0f1;
}
.sbtn {
    display: flex;
    align-items: center;
    justify-content: center;
    width: 20px;
    height: 19px;
    margin-right: 3px;
    border: 1px solid #c3c6c8;
    border-right-color: #fff;
    border-bottom-color: #fff;
    background: #f3f4f5;
}
.msg {
    display: flex;
    flex: 1;
    align-items: center;
    gap: 2px;
    margin-left: 4px;
    padding-left: 4px;
    border-left: 1px solid #ccc;
    font-size: 9px;
    line-height: 20px;
}
.cell {
    width: 32px;
    height: 22px;
    border-left: 1px solid #ccc;
}
.dots {
    display: flex;
    align-items: center;
    gap: 2px;
    padding-left: 3px;
}
.dots i {
    width: 5px;
    height: 5px;
    border-radius: 50%;
    background: #d8d8d8;
}
.dots i:first-child {
    width: 9px;
    height: 9px;
    background: #bbb;
}
.find {
    display: flex;
    align-items: center;
    justify-content: center;
    width: 35px;
    height: 19px;
    border: 1px solid #bbb;
    border-radius: 2px;
    background: linear-gradient(#fff, #e9eaea);
}
.select {
    position: relative;
    display: block;
    height: 17px;
    border: 1px solid #ccd0d2;
    background: #f8f9f9;
}
.select select {
    appearance: none;
    width: 100%;
    height: 15px;
    padding-left: 4px;
}
/* drop-down arrow over the select */
.select::after {
    content: "";
    position: absolute;
    top: 6px;
    right: 3px;
    border: 3px solid transparent;
    border-top: 4px solid #555;
    border-bottom: 0;
    pointer-events: none;
}
.select::before {
    content: "";
    position: absolute;
    top: 0;
    bottom: 0;
    right: 12px;
    border-left: 1px solid #bbb;
}
.filter {
    width: 148px;
    margin-left: 89px;
}

/* mass properties dialog */
.dialog {
    position: absolute;
    top: 71px;
    right: 5px;
    width: 273px;
    padding: 0 4px 4px;
    border: 2px solid #b5bcbf;
    background: #edf0f1;
}
.dlg-title {
    display: flex;
    align-items: center;
    height: 20px;
    margin: 0 -2px;
    padding: 0 7px 0 0;
    border-bottom: 1px solid #c2c7c9;
    background: linear-gradient(#f7f8f8, #dfe4e6);
}
.dlg-title h2 {
    flex: 1;
    text-align: center;
    font-size: 11px;
    font-weight: bold;
    color: #444;
}
.dlg-tabs {
    display: flex;
    align-items: flex-end;
    height: 19px;
}
.dlg-tabs button {
    width: 34px;
    height: 16px;
    border: 1px solid #ccd0d2;
    border-left: 0;
    border-bottom: 0;
    color: #777;
    font-weight: bold;
}
.dlg-tabs .on {
    position: relative;
    height: 18px;
    margin-bottom: -1px;
    border-width: 0 1px 0 0;
    background: #fcfcfc;
    color: #111;
}
.panel {
    border: 1px solid #ccd0d2;
    background: #fcfcfc;
}
.sect {
    padding-right: 5px;
    padding-left: 7px;
    border-bottom: 1px solid #d8dbdc;
}
.sect:last-child {
    border-bottom: 0;
}
.row {
    display: flex;
    align-items: center;
}
.field {
    flex: 1;
    min-width: 0;
    height: 17px;
    border: 1px solid #d2d2da;
    background: #fff;
}
.geom {
    padding-top: 5px;
    padding-bottom: 5px;
}
.geom .row {
    height: 17px;
}
input[type=radio], input[type=checkbox] {
    flex: none;
    width: 12px;
    height: 12px;
    margin: 0 6px 0 1px;
}
input[type=radio] {
    appearance: none;
    border: 1px solid #777;
    border-radius: 50%;
    background: #fff;
}
input[type=radio]:checked {
    background: radial-gradient(#222 3px, #fff 4px);
}
#quilt {
    border-color: #aaa;
}
.geom .field {
    margin-left: 31px;
    background: #fbfaff;
}
.csys {
    display: grid;
    grid-template-columns: 55px 1fr;
    padding-top: 13px;
    padding-bottom: 4px;
}
.csys > label {
    margin-top: -3px;
}
.csys > div {
    padding-right: 2px;
}
.csys .field {
    width: 100%;
    padding-left: 16px;
    border-color: #aaaab2;
    background: #f0edfa;
    color: #111;
}
.csys .row {
    height: 18px;
    padding-left: 2px;
}
input[type=checkbox] {
    appearance: none;
    border: 1px solid #888;
    background: #fff;
}
input[type=checkbox]:checked::before {
    content: "";
    display: block;
    width: 9px;
    height: 5px;
    margin: 1px 0 0 1px;
    border: solid #222;
    border-width: 0 0 2px 2px;
    transform: rotate(-45deg);
}
.values {
    padding-top: 12px;
    padding-bottom: 4px;
    padding-left: 6px;
}
.values .row + .row {
    margin-top: 8px;
}
.values label {
    width: 54px;
}
.values label.dens {
    width: 80px;
}
.combo {
    display: flex;
    flex: 1;
    height: 17px;
    border: 1px solid #b9bdbf;
    background: #fff;
}
.combo input {
    flex: 1;
    min-width: 0;
    padding-left: 3px;
    font-family: "Liberation Mono", monospace;
    font-size: 9px;
}
.combo button, .vbar button, .hbar button {
    display: flex;
    align-items: center;
    justify-content: center;
}
.combo button {
    width: 13px;
    border-left: 1px solid #c5c9cb;
    background: #edf0f1;
}
.result {
    display: flex;
    align-items: flex-end;
    gap: 15px;
    margin-top: 23px;
}
.info {
    margin-bottom: 6px;
}
.report {
    display: grid;
    grid-template-columns: 1fr 15px;
    grid-template-rows: 1fr 15px;
    width: 212px;
    height: 95px;
    margin-left: 2px;
    padding: 1px;
    border: 1px solid #b4b8ba;
    background: #fff;
}
.report pre {
    overflow: hidden;
    padding: 2px 0 0 3px;
    background: #f3f4f4;
    font-family: inherit;
    font-size: 10px;
    line-height: 11px;
}
.report pre span {
    line-height: 10px;
}
.vbar, .hbar {
    display: flex;
    border: 1px solid #ccd0d2;
    background: #edf0f1;
}
.vbar {
    flex-direction: column;
}
.vbar button, .hbar button {
    flex: none;
    width: 13px;
    height: 13px;
    background: #f7f8f8;
}
.vbar .thumb {
    height: 15px;
    margin-bottom: auto;
    border: 1px solid #ccc;
    background: repeating-linear-gradient(#bbb 0 1px, #f8f8f8 1px 3px) center / 6px 9px no-repeat #f8f8f8;
}
.hbar .thumb {
    width: 97px;
    margin-right: auto;
    border: 1px solid #ccc;
    background: repeating-linear-gradient(90deg, #bbb 0 1px, #f8f8f8 1px 3px) center / 10px 6px no-repeat #f8f8f8;
}
.name {
    gap: 4px;
    margin-top: 7px;
}
.name .select {
    width: 57px;
}
.name .field {
    padding-left: 1px;
    font-family: "Liberation Mono", monospace;
    font-size: 9px;
}
.name .field::placeholder {
    color: #999;
    opacity: 1;
}
.actions {
    display: flex;
    justify-content: space-between;
    padding: 4px 13px 0 15px;
}
.actions button {
    display: flex;
    align-items: center;
    justify-content: center;
    width: 36px;
    height: 25px;
    border: 1px solid #c3c7c9;
    border-radius: 2px;
    background: linear-gradient(#fff, #eceeef);
}
.actions .active {
    border-color: #7fc0e0;
    background: linear-gradient(#b4e0f7, #8fd0f3);
    outline: 1px dotted #345;
    outline-offset: -3px;
}
```
